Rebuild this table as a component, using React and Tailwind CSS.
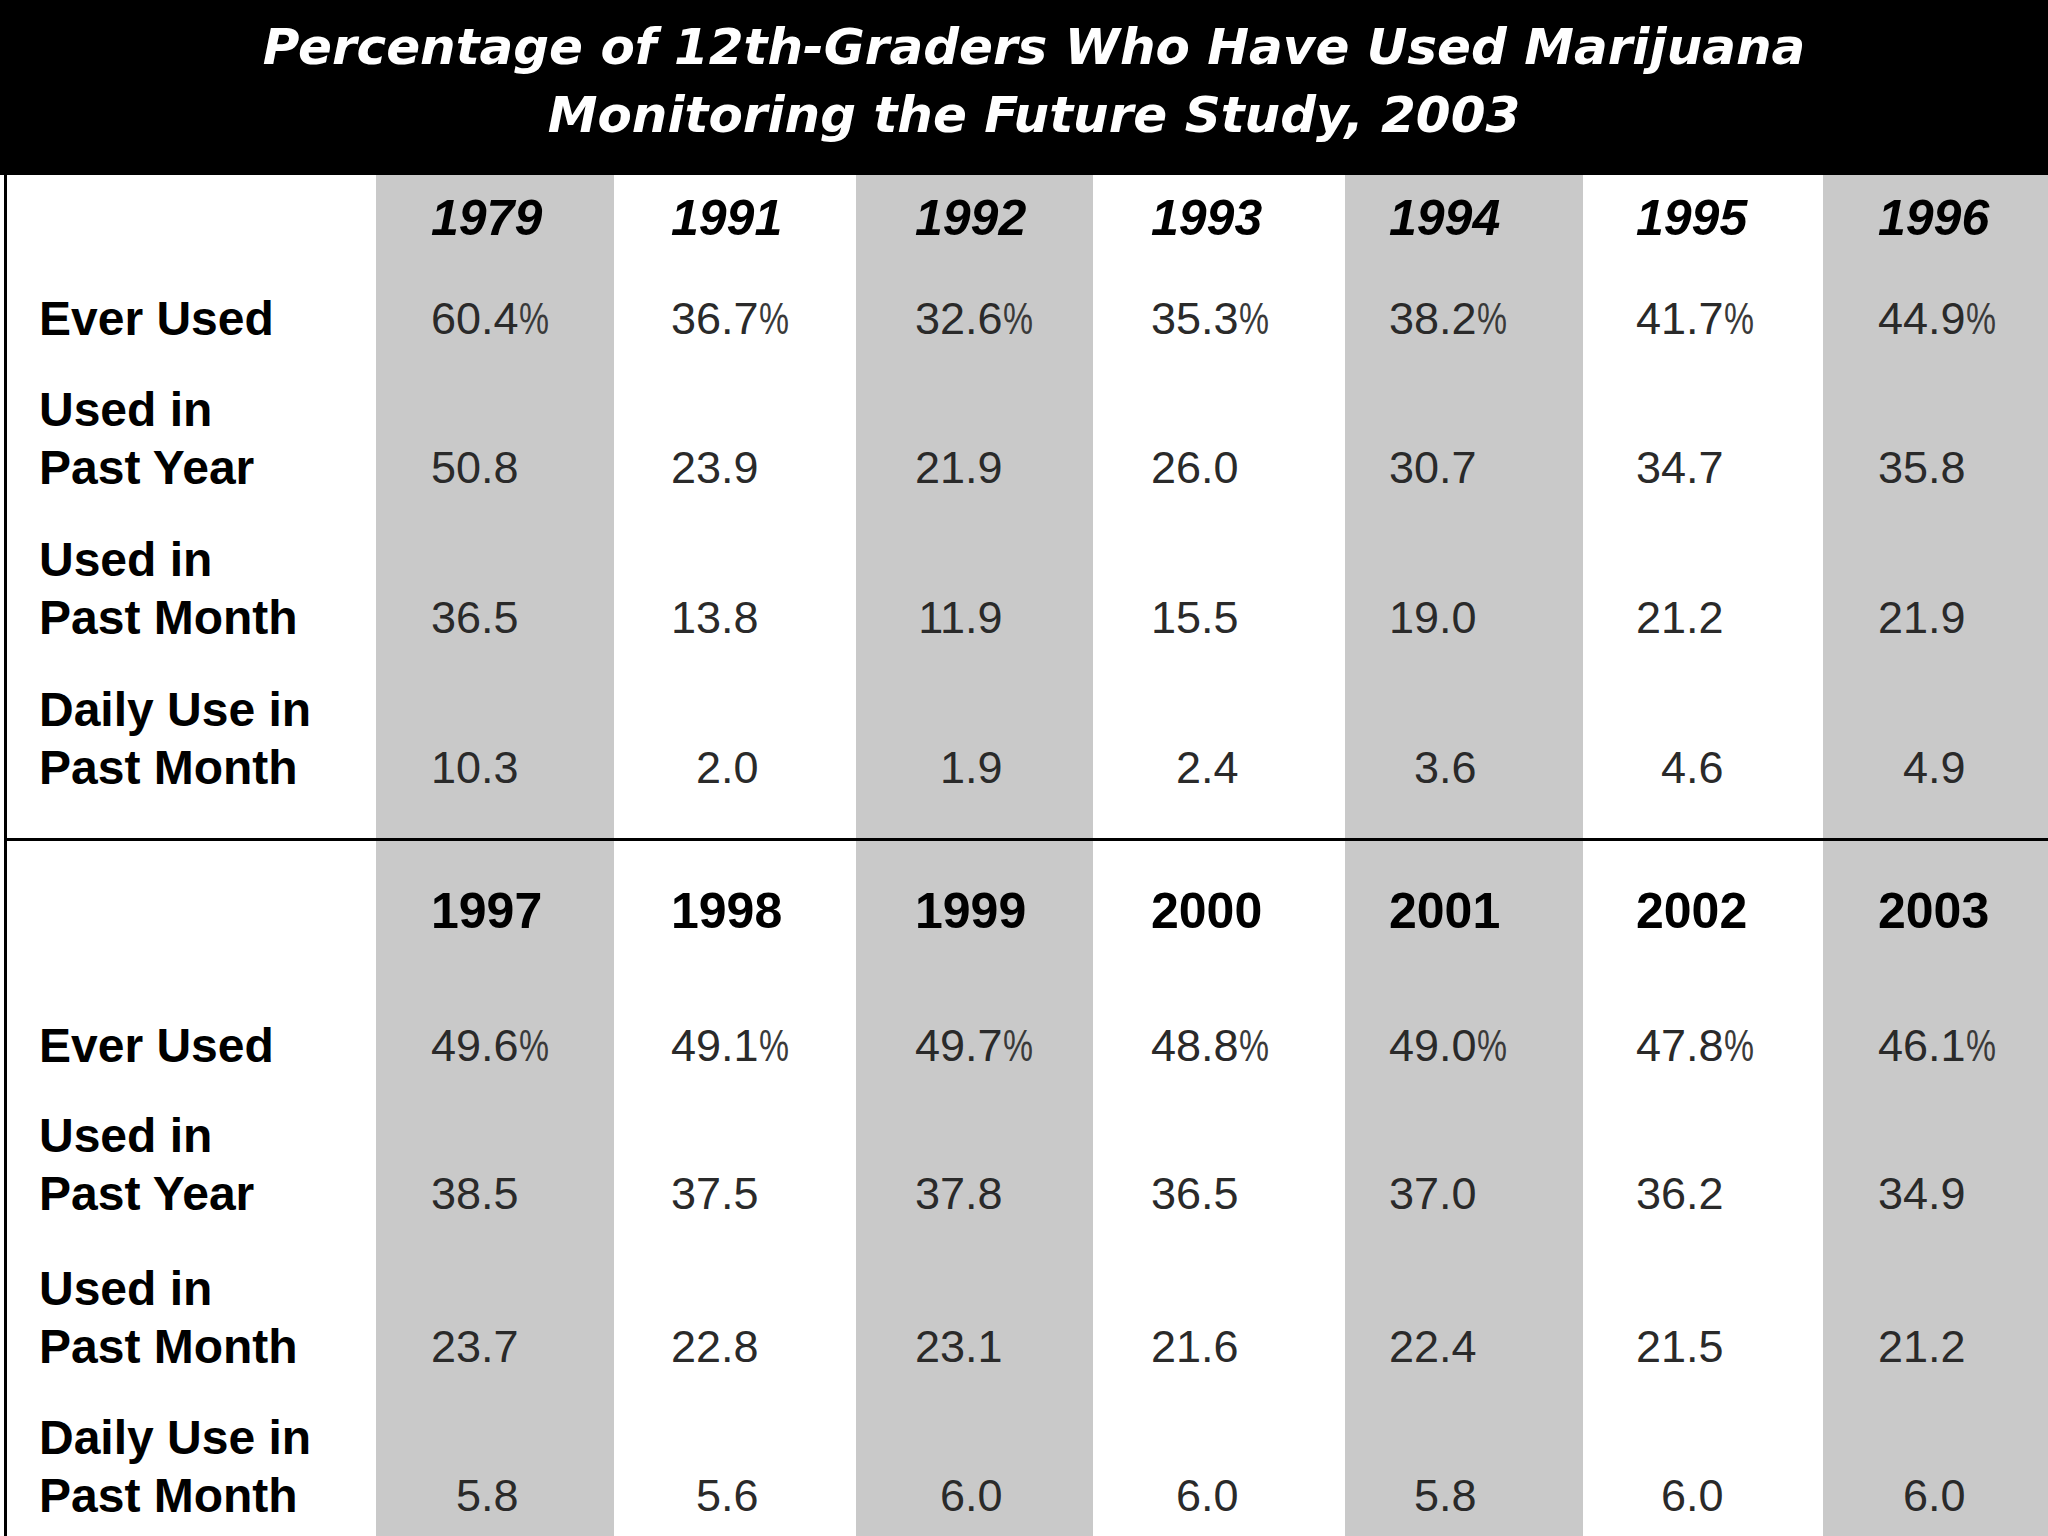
import React from "react";

const COLS = [
  { w: "w-[238px]", pl: "pl-[55px]", bg: "bg-[#c9c9c9]" },
  { w: "w-[242px]", pl: "pl-[57px]", bg: "bg-white" },
  { w: "w-[237px]", pl: "pl-[59px]", bg: "bg-[#c9c9c9]" },
  { w: "w-[252px]", pl: "pl-[58px]", bg: "bg-white" },
  { w: "w-[238px]", pl: "pl-[44px]", bg: "bg-[#c9c9c9]" },
  { w: "w-[240px]", pl: "pl-[53px]", bg: "bg-white" },
  { w: "w-[225px]", pl: "pl-[55px]", bg: "bg-[#c9c9c9]" },
];

const LABELS = [["Ever Used"], ["Used in", "Past Year"], ["Used in", "Past Month"], ["Daily Use in", "Past Month"]];

const SECTIONS = [
  {
    years: ["1979", "1991", "1992", "1993", "1994", "1995", "1996"],
    italic: true,
    yearH: "h-[72px]",
    rowH: ["h-[101px]", "h-[149px]", "h-[150px]", "h-[150px]"],
    padH: "h-[41px]",
    rows: [
      ["60.4%", "36.7%", "32.6%", "35.3%", "38.2%", "41.7%", "44.9%"],
      ["50.8", "23.9", "21.9", "26.0", "30.7", "34.7", "35.8"],
      ["36.5", "13.8", "11.9", "15.5", "19.0", "21.2", "21.9"],
      ["10.3", "2.0", "1.9", "2.4", "3.6", "4.6", "4.9"],
    ],
  },
  {
    years: ["1997", "1998", "1999", "2000", "2001", "2002", "2003"],
    italic: false,
    yearH: "h-[99px]",
    rowH: ["h-[135px]", "h-[148px]", "h-[153px]", "h-[149px]"],
    padH: "h-[11px]",
    rows: [
      ["49.6%", "49.1%", "49.7%", "48.8%", "49.0%", "47.8%", "46.1%"],
      ["38.5", "37.5", "37.8", "36.5", "37.0", "36.2", "34.9"],
      ["23.7", "22.8", "23.1", "21.6", "22.4", "21.5", "21.2"],
      ["5.8", "5.6", "6.0", "6.0", "5.8", "6.0", "6.0"],
    ],
  },
];

function Value({ v }) {
  const pct = v.endsWith("%");
  const [int, rest] = v.replace("%", "").split(".");
  return (
    <div className="flex items-baseline text-[45px] leading-[58px] text-[#2a2a2a] font-['Liberation_Sans',Arial,sans-serif]">
      <span className="inline-block w-[50px] text-right">{int}</span>
      <span>.{rest}</span>
      {pct && <span className="inline-block scale-x-75 origin-left text-[#3a3a3a]">%</span>}
    </div>
  );
}

function Section({ s }) {
  return (
    <div className="flex">
      {/* Labels */}
      <div className="w-[369px] pl-[32px] flex flex-col bg-white">
        <div className={s.yearH} />
        {LABELS.map((lines, i) => (
          <div key={i} className={`flex flex-col justify-end ${s.rowH[i]}`}>
            {lines.map((l) => (
              <div key={l} className="text-[48px] leading-[58px] font-bold text-black font-['Liberation_Sans',Arial,sans-serif] whitespace-nowrap">
                {l}
              </div>
            ))}
          </div>
        ))}
        <div className={s.padH} />
      </div>

      {/* Year columns */}
      {COLS.map((c, ci) => (
        <div key={ci} className={`flex flex-col ${c.w} ${c.pl} ${c.bg}`}>
          <div className={`flex flex-col justify-end ${s.yearH}`}>
            <div
              className={`text-[50px] leading-[58px] font-bold text-black font-['Liberation_Sans',Arial,sans-serif] ${
                s.italic ? "italic" : ""
              }`}
            >
              {s.years[ci]}
            </div>
          </div>
          {s.rows.map((r, ri) => (
            <div key={ri} className={`flex flex-col justify-end ${s.rowH[ri]}`}>
              <Value v={r[ci]} />
            </div>
          ))}
          <div className={s.padH} />
        </div>
      ))}
    </div>
  );
}

export default function App() {
  return (
    <div className="w-[2048px] h-[1536px] bg-white overflow-hidden">
      {/* Title */}
      <div className="h-[175px] bg-black pt-[13px] pl-[20px] text-center text-white italic font-bold text-[50px] leading-[68px] font-['DejaVu_Sans',sans-serif]">
        <div>Percentage of 12th-Graders Who Have Used Marijuana</div>
        <div>Monitoring the Future Study, 2003</div>
      </div>

      {/* Table */}
      <div className="pl-[4px] bg-white">
        <div className="border-l-[3px] border-black">
          <Section s={SECTIONS[0]} />
          <div className="h-[3px] bg-black" />
          <Section s={SECTIONS[1]} />
        </div>
      </div>
    </div>
  );
}
